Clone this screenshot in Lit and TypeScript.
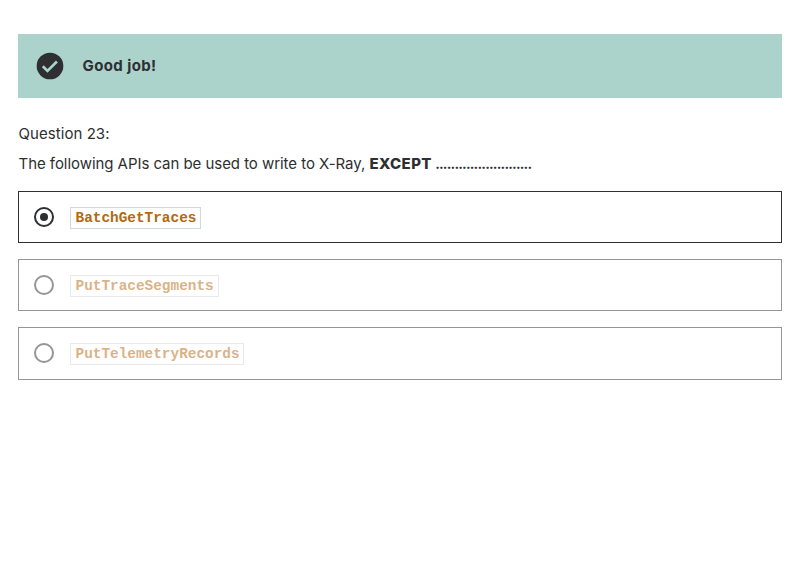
import { LitElement, html, css, svg } from "lit";
import { customElement, property } from "lit/decorators.js";

@customElement("answer-option")
class AnswerOption extends LitElement {
  @property() label = "";
  @property({ type: Boolean, reflect: true }) selected = false;
  static styles = css`
    :host { display: block; box-sizing: border-box; height: 52.4px; border: 1px solid #2d2f31; }
    :host(:not([selected])) { border-color: #959596; }
    .row { display: flex; align-items: flex-start; height: 50.4px; padding: 13px 0 0 13px; box-sizing: border-box; }
    svg { width: 24px; height: 24px; flex: none; color: #2d2f31; }
    code { font: 700 14.4px/20px "Liberation Mono", monospace; color: #b4690e; border: 1px solid #d1d7dc; padding: 0 3.9px 0 4.5px; margin: 2px 0 0 14px; }
    :host(:not([selected])) .row { opacity: .5; }
  `;
  render() {
    return html`<div class="row">
      <svg viewBox="0 0 24 24"><circle cx="12" cy="12" r="9" fill="none" stroke="currentColor" stroke-width="2" />
      ${this.selected ? svg`<circle cx="12" cy="12" r="4" fill="currentColor" />` : ""}</svg>
      <code>${this.label}</code></div>`;
  }
}

@customElement("app-root")
class AppRoot extends LitElement {
  static styles = css`
    :host { display: block; box-sizing: border-box; padding: 34px 27px 0 18px; color: #2d2f31; background: #fff; font: 400 15px/22.4px Inter, sans-serif; min-height: 572px; }
    .banner { display: flex; align-items: center; height: 64px; background: #acd2cc; padding-left: 16px; gap: 16.5px; font-weight: 700; letter-spacing: .4px; }
    .banner svg { width: 32px; height: 32px; }
    .num { margin-top: 25.4px; padding-left: .5px; letter-spacing: .06px; }
    .question { margin: 7.6px 0 14.8px; padding-left: .5px; letter-spacing: -.05px; }
    b { font-weight: 800; letter-spacing: .45px; }
    .dots { font-size: 14px; font-weight: 700; letter-spacing: -.83px; margin-left: -1px; }
    .options { display: grid; gap: 16px; }
  `;
  render() {
    return html`
      <div class="banner">
        <svg viewBox="0 0 24 24"><circle cx="12" cy="12" r="10" fill="#2d2f31" /><path fill="none" stroke="#acd2cc" stroke-width="2" d="M6.600 12.200l3.500 3.500L17.200 8.600" /></svg>
        <span>Good job!</span>
      </div>
      <div class="num">Question 23:</div>
      <div class="question">The following APIs can be used to write to X-Ray, <b>EXCEPT</b> <b class="dots">.........................</b></div>
      <div class="options">
        <answer-option label="BatchGetTraces" selected></answer-option>
        <answer-option label="PutTraceSegments"></answer-option>
        <answer-option label="PutTelemetryRecords"></answer-option>
      </div>`;
  }
}
